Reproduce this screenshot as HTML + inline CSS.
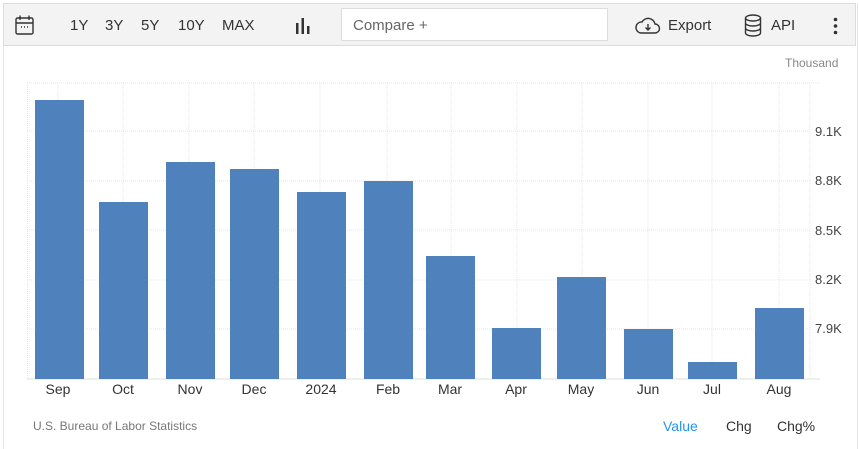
<!DOCTYPE html>
<html><head><meta charset="utf-8"><style>
body{margin:0;width:859px;height:449px;background:#fff;font-family:"Liberation Sans",sans-serif;position:relative;overflow:hidden}
.frame{position:absolute;left:3px;top:3px;width:853px;height:446px;border-left:1px solid #e6e6e6;border-right:1px solid #e6e6e6}
.tb{position:absolute;left:3px;top:3px;width:851px;height:41px;background:#f3f3f3;border:1px solid #dcdcdc}
.t{position:absolute;top:17px;font-size:15px;color:#333}
.cmp{position:absolute;left:341px;top:8px;width:267px;height:33px;background:#fff;border:1px solid #ddd;box-sizing:border-box;font-size:15px;color:#666;padding:8px 11px}
.bar{position:absolute;background:#4f81bd}
.x{position:absolute;top:381px;font-size:14px;color:#333;width:60px;text-align:center}
.y{position:absolute;left:815px;font-size:13px;color:#444}
</style></head><body>
<div class="frame"></div>
<div class="tb"></div>
<svg style="position:absolute;left:15px;top:15px" width="20" height="22" viewBox="0 0 20 22" fill="none" stroke="#333" stroke-width="1.4"><rect x="1" y="3" width="17" height="16" rx="1.5"/><line x1="1" y1="8" x2="18" y2="8"/><line x1="5" y1="0.5" x2="5" y2="5"/><line x1="14" y1="0.5" x2="14" y2="5"/><line x1="6" y1="12" x2="7" y2="12"/><line x1="9" y1="12" x2="10" y2="12"/><line x1="12" y1="12" x2="13" y2="12"/></svg>
<div class="t" style="left:70px">1Y</div><div class="t" style="left:105px">3Y</div><div class="t" style="left:141px">5Y</div><div class="t" style="left:178px">10Y</div><div class="t" style="left:222px">MAX</div>
<svg style="position:absolute;left:295px;top:18px" width="16" height="16"><rect x="1" y="5" width="2.5" height="11" fill="#333"/><rect x="6.5" y="0" width="2.5" height="16" fill="#333"/><rect x="12" y="8" width="2.5" height="8" fill="#333"/></svg>
<div class="cmp">Compare +</div>
<svg style="position:absolute;left:635px;top:16px" width="26" height="20" viewBox="0 0 26 20" fill="none" stroke="#333" stroke-width="1.4"><path d="M6 17 H20 A4.5 4.5 0 0 0 20 8 A7 7 0 0 0 7 6 A5.5 5.5 0 0 0 6 17Z"/><path d="M13 8 V14 M10.5 11.5 L13 14 L15.5 11.5"/></svg>
<div class="t" style="left:668px">Export</div>
<svg style="position:absolute;left:744px;top:14px" width="18" height="23" viewBox="0 0 18 23" fill="none" stroke="#333" stroke-width="1.4"><ellipse cx="9" cy="4" rx="7.5" ry="3"/><path d="M1.5 4 V19 A7.5 3 0 0 0 16.5 19 V4 M1.5 9 A7.5 3 0 0 0 16.5 9 M1.5 14 A7.5 3 0 0 0 16.5 14"/></svg>
<div class="t" style="left:771px">API</div>
<svg style="position:absolute;left:833px;top:17px" width="5" height="18"><circle cx="2.5" cy="2.5" r="1.8" fill="#333"/><circle cx="2.5" cy="9" r="1.8" fill="#333"/><circle cx="2.5" cy="15.5" r="1.8" fill="#333"/></svg>
<div style="position:absolute;left:785px;top:56px;font-size:12px;color:#888">Thousand</div>
<svg style="position:absolute;left:0;top:0" width="859" height="449">
<g stroke="#e4e4e4" stroke-dasharray="1,1" stroke-width="1">
<line x1="27" y1="83" x2="820" y2="83"/><line x1="27" y1="131" x2="810" y2="131"/><line x1="27" y1="181" x2="810" y2="181"/><line x1="27" y1="230" x2="810" y2="230"/><line x1="27" y1="280" x2="810" y2="280"/><line x1="27" y1="329" x2="810" y2="329"/>
<line x1="27.5" y1="83" x2="27.5" y2="378"/><line x1="58" y1="83" x2="58" y2="378"/><line x1="123" y1="83" x2="123" y2="378"/><line x1="189" y1="83" x2="189" y2="378"/><line x1="254" y1="83" x2="254" y2="378"/><line x1="320" y1="83" x2="320" y2="378"/><line x1="387" y1="83" x2="387" y2="378"/><line x1="451" y1="83" x2="451" y2="378"/><line x1="517" y1="83" x2="517" y2="378"/><line x1="582" y1="83" x2="582" y2="378"/><line x1="648" y1="83" x2="648" y2="378"/><line x1="712" y1="83" x2="712" y2="378"/><line x1="779" y1="83" x2="779" y2="378"/><line x1="810" y1="83" x2="810" y2="378"/>
</g>
<line x1="27" y1="379" x2="820" y2="379" stroke="#ddd"/>
</svg>
<div class="bar" style="left:35px;top:100px;width:49px;height:279px"></div>
<div class="bar" style="left:99px;top:202px;width:49px;height:177px"></div>
<div class="bar" style="left:166px;top:162px;width:49px;height:217px"></div>
<div class="bar" style="left:230px;top:169px;width:49px;height:210px"></div>
<div class="bar" style="left:297px;top:192px;width:49px;height:187px"></div>
<div class="bar" style="left:364px;top:181px;width:49px;height:198px"></div>
<div class="bar" style="left:426px;top:256px;width:49px;height:123px"></div>
<div class="bar" style="left:492px;top:328px;width:49px;height:51px"></div>
<div class="bar" style="left:557px;top:277px;width:49px;height:102px"></div>
<div class="bar" style="left:624px;top:329px;width:49px;height:50px"></div>
<div class="bar" style="left:688px;top:362px;width:49px;height:17px"></div>
<div class="bar" style="left:755px;top:308px;width:49px;height:71px"></div>
<div class="x" style="left:28px">Sep</div><div class="x" style="left:93px">Oct</div><div class="x" style="left:160px">Nov</div><div class="x" style="left:224px">Dec</div><div class="x" style="left:291px">2024</div><div class="x" style="left:358px">Feb</div><div class="x" style="left:420px">Mar</div><div class="x" style="left:486px">Apr</div><div class="x" style="left:551px">May</div><div class="x" style="left:618px">Jun</div><div class="x" style="left:682px">Jul</div><div class="x" style="left:749px">Aug</div>
<div class="y" style="top:124px">9.1K</div><div class="y" style="top:173px">8.8K</div><div class="y" style="top:223px">8.5K</div><div class="y" style="top:272px">8.2K</div><div class="y" style="top:321px">7.9K</div>
<div style="position:absolute;left:33px;top:419px;font-size:12px;color:#777">U.S. Bureau of Labor Statistics</div>
<div style="position:absolute;left:663px;top:418px;font-size:14px;color:#2196f3">Value</div>
<div style="position:absolute;left:726px;top:418px;font-size:14px;color:#333">Chg</div>
<div style="position:absolute;left:777px;top:418px;font-size:14px;color:#333">Chg%</div>
</body></html>
